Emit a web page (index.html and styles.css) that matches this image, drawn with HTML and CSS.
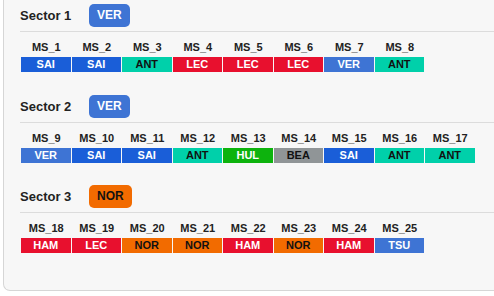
FILE: index.html
```html
<!DOCTYPE html>
<html>
<head>
<meta charset="utf-8">
<link rel="stylesheet" href="styles.css">
</head>
<body>
<div class="card">
  <section class="sector">
    <div class="head"><span class="title">Sector 1</span><span class="badge ver">VER</span></div>
    <div class="row">
      <div class="cell"><div class="lbl">MS_1</div><div class="bar sai">SAI</div></div>
      <div class="cell"><div class="lbl">MS_2</div><div class="bar sai">SAI</div></div>
      <div class="cell"><div class="lbl">MS_3</div><div class="bar ant">ANT</div></div>
      <div class="cell"><div class="lbl">MS_4</div><div class="bar lec">LEC</div></div>
      <div class="cell"><div class="lbl">MS_5</div><div class="bar lec">LEC</div></div>
      <div class="cell"><div class="lbl">MS_6</div><div class="bar lec">LEC</div></div>
      <div class="cell"><div class="lbl">MS_7</div><div class="bar ver">VER</div></div>
      <div class="cell"><div class="lbl">MS_8</div><div class="bar ant">ANT</div></div>
    </div>
  </section>
  <section class="sector">
    <div class="head"><span class="title">Sector 2</span><span class="badge ver">VER</span></div>
    <div class="row">
      <div class="cell"><div class="lbl">MS_9</div><div class="bar ver">VER</div></div>
      <div class="cell"><div class="lbl">MS_10</div><div class="bar sai">SAI</div></div>
      <div class="cell"><div class="lbl">MS_11</div><div class="bar sai">SAI</div></div>
      <div class="cell"><div class="lbl">MS_12</div><div class="bar ant">ANT</div></div>
      <div class="cell"><div class="lbl">MS_13</div><div class="bar hul">HUL</div></div>
      <div class="cell"><div class="lbl">MS_14</div><div class="bar bea">BEA</div></div>
      <div class="cell"><div class="lbl">MS_15</div><div class="bar sai">SAI</div></div>
      <div class="cell"><div class="lbl">MS_16</div><div class="bar ant">ANT</div></div>
      <div class="cell"><div class="lbl">MS_17</div><div class="bar ant">ANT</div></div>
    </div>
  </section>
  <section class="sector">
    <div class="head"><span class="title">Sector 3</span><span class="badge nor">NOR</span></div>
    <div class="row">
      <div class="cell"><div class="lbl">MS_18</div><div class="bar ham">HAM</div></div>
      <div class="cell"><div class="lbl">MS_19</div><div class="bar lec">LEC</div></div>
      <div class="cell"><div class="lbl">MS_20</div><div class="bar nor">NOR</div></div>
      <div class="cell"><div class="lbl">MS_21</div><div class="bar nor">NOR</div></div>
      <div class="cell"><div class="lbl">MS_22</div><div class="bar ham">HAM</div></div>
      <div class="cell"><div class="lbl">MS_23</div><div class="bar nor">NOR</div></div>
      <div class="cell"><div class="lbl">MS_24</div><div class="bar ham">HAM</div></div>
      <div class="cell"><div class="lbl">MS_25</div><div class="bar tsu">TSU</div></div>
    </div>
  </section>
</div>
</body>
</html>
```

FILE: styles.css
```css
html, body {
  margin: 0;
  padding: 0;
  background: #ffffff;
  overflow: hidden;
}
body {
  padding-left: 3px;
  font-family: "Liberation Sans", Arial, sans-serif;
  color: #222;
}
.card {
  height: 291px;
  box-sizing: border-box;
  background: #f7f7f7;
  border: 1px solid #d6d6d6;
  border-top: none;
  border-right: none;
  border-radius: 0 0 0 7px;
  padding: 4px 0 0 16px;
}
.sector {
  margin-bottom: 22.5px;
}
.head {
  display: flex;
  align-items: center;
  height: 23px;
  margin-bottom: 4px;
}
.title {
  font-size: 13px;
  font-weight: bold;
  width: 69px;
}
.badge {
  display: inline-block;
  height: 23px;
  line-height: 23px;
  padding: 0 8px;
  border-radius: 5px;
  font-size: 12px;
  font-weight: bold;
  background: #3e74d4;
  color: #fff;
}
.badge.nor {
  background: #f26b00;
  color: #111;
}
.row {
  border-top: 1px solid #dcdcdc;
  padding: 9px 0 0 1px;
  display: flex;
}
.cell {
  width: 50.5px;
  flex: none;
}
.lbl {
  font-size: 11px;
  font-weight: bold;
  line-height: 13px;
  text-align: center;
  margin-bottom: 3px;
  color: #222;
}
.bar {
  height: 15px;
  line-height: 15px;
  margin-right: 1px;
  font-size: 11px;
  font-weight: bold;
  text-align: center;
  color: #fff;
}
.sai { background: #1a5ed8; }
.ver { background: #3e74d4; }
.tsu { background: #3e74d4; }
.lec { background: #e8102e; }
.ham { background: #e8102e; }
.ant { background: #00d0aa; color: #111; }
.hul { background: #0db30d; }
.bea { background: #909597; color: #111; }
.nor { background: #f26b00; color: #111; }
```
